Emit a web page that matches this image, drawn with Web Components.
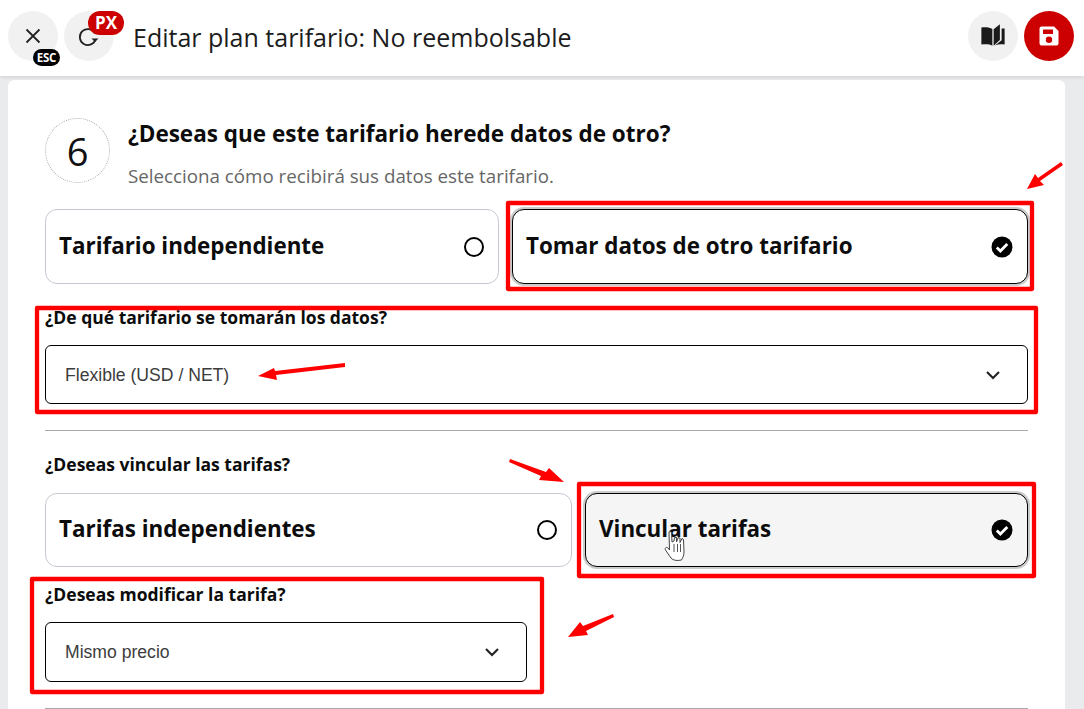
<!DOCTYPE html>
<html lang="es"><head><meta charset="utf-8"><title>Editar plan tarifario</title>
<style>
html,body{margin:0;padding:0;height:709px;overflow:hidden}
body{background:#eaebed;font-family:"Open Sans",sans-serif;color:#111;position:relative}
</style></head><body>
<x-header>
  <x-round slot="left" kind="gray" badge="ESC" badge-kind="esc"><svg viewBox="0 0 24 24" width="24" height="24"><path d="M5.5 5.5 18.5 18.5M18.5 5.5 5.5 18.5" stroke="#222" stroke-width="1.8" fill="none"/></svg></x-round>
  <x-round slot="left" kind="gray" badge="PX" badge-kind="px"><svg viewBox="0 0 24 24" width="24" height="24" style="margin-left:-2px"><path d="M19 9.5A8 8 0 1 0 19.6 15" stroke="#222" stroke-width="1.8" fill="none"/><path d="M15.5 14.5h7l-3.5 3.6z" fill="#222"/></svg></x-round>
  <span slot="title">Editar plan tarifario: No reembolsable</span>
  <x-round slot="right" kind="gray"><svg viewBox="0 0 26 24" width="28" height="26"><path d="M12.4 5.6C10 4 6 3.6 2.2 4.2V20C6 19.3 10 19.6 12.4 21Z" fill="#1a1a1a"/><path d="M13.6 5.8 19.4 1V15.6L13.6 21Z" fill="#1a1a1a"/><path d="M21 5 23.8 5V20C20.6 19.3 17.4 19.6 14.8 20.8L21 16Z" fill="#1a1a1a"/></svg></x-round>
  <x-round slot="right" kind="red"><svg viewBox="0 0 24 24" width="24" height="24"><path fill-rule="evenodd" d="M4.5 2.5H17L21.5 7V19.5A2 2 0 0 1 19.5 21.5H4.5A2 2 0 0 1 2.5 19.5V4.5A2 2 0 0 1 4.5 2.5ZM6 5.5V10H16V5.5ZM12 12.5A3.2 3.2 0 1 0 12 18.9 3.2 3.2 0 1 0 12 12.5Z" fill="#fff"/></svg></x-round>
</x-header>
<x-card>
  <x-step num="6" heading="¿Deseas que este tarifario herede datos de otro?" sub="Selecciona cómo recibirá sus datos este tarifario."></x-step>
  <x-options columns="454px 1fr">
    <x-option label="Tarifario independiente"></x-option>
    <x-option label="Tomar datos de otro tarifario" selected></x-option>
  </x-options>
  <x-select label="¿De qué tarifario se tomarán los datos?" value="Flexible (USD / NET)" style="margin-top:22px;--h:59px"></x-select>
  <x-rule style="margin-top:26px"></x-rule>
  <x-label style="margin-top:22px">¿Deseas vincular las tarifas?</x-label>
  <x-options columns="527px 1fr" style="margin-top:18px;--oh:74px">
    <x-option label="Tarifas independientes"></x-option>
    <x-option label="Vincular tarifas" selected hover></x-option>
  </x-options>
  <x-select label="¿Deseas modificar la tarifa?" value="Mismo precio" style="margin-top:16px;width:482px"></x-select>
  <x-rule style="margin-top:26px"></x-rule>
</x-card>
<x-annotations></x-annotations>
<script>
function def(name, css, html, init){
  customElements.define(name, class extends HTMLElement{
    connectedCallback(){
      if(this.shadowRoot) return;
      const r=this.attachShadow({mode:'open'});
      const a=n=>this.getAttribute(n)||'';
      r.innerHTML='<style>'+css+'</style>'+(typeof html==='function'?html(a,this):html);
      if(init) init(r,this);
    }
  });
}
def('x-header',`
:host{display:flex;align-items:center;height:76px;background:#fff;padding:0 10px 0 8px;box-sizing:border-box;box-shadow:0 1px 4px rgba(0,0,0,.12);position:relative;z-index:1}
.l,.r{display:flex;gap:6px}
.t{flex:1;margin-left:19px;font:400 25px/32px "Open Sans",sans-serif;color:#1c1c1c;position:relative;top:-1px}
`,`<div class="l"><slot name="left"></slot></div><div class="t"><slot name="title"></slot></div><div class="r"><slot name="right"></slot></div>`);
def('x-round',`
:host{display:flex;width:50px;height:50px;border-radius:50%;align-items:center;justify-content:center;position:relative;margin-top:-4px}
:host([kind=gray]){background:#f1f1f1}
:host([kind=red]){background:#cc0000}
.b{position:absolute;font-family:"Open Sans",sans-serif;font-weight:700;color:#fff;text-align:center}
.esc{left:25px;top:38px;width:27px;height:17px;background:#000;font-size:11.5px;line-height:17px;border-radius:9px;letter-spacing:-.2px}
.px{left:24px;top:0;width:36px;height:24px;background:#cc0000;font-size:17px;line-height:24px;border-radius:12px}
`,(a)=>`<slot></slot>${a('badge')?`<span class="b ${a('badge-kind')}">${a('badge')}</span>`:''}`);
def('x-card',`
:host{display:block;box-sizing:border-box;width:1057px;height:640px;margin:4px 0 0 8px;background:#fff;border-radius:6px 6px 0 0;padding:38px 37px 0 37px;overflow:hidden}
`,`<slot></slot>`);
def('x-step',`
:host{display:flex;gap:18px;height:91px}
.n{width:65px;height:65px;box-sizing:border-box;border:1px dotted #aaa;border-radius:50%;display:flex;align-items:center;justify-content:center;font-size:38px;color:#111;flex:none}
h2{margin:1px 0 0;font:700 22.5px/30px "Open Sans",sans-serif;color:#0c0c0c}
p{margin:15px 0 0;font:400 18.75px/24px "Open Sans",sans-serif;color:#666}
`,(a)=>`<div class="n">${a('num')}</div><div class="b"><h2>${a('heading')}</h2><p>${a('sub')}</p></div>`);
def('x-options',`
:host{display:grid;gap:13px}
`,`<slot></slot>`,(r,h)=>{h.style.gridTemplateColumns=h.getAttribute('columns')});
def('x-option',`
:host{display:flex;align-items:center;justify-content:space-between;box-sizing:border-box;height:var(--oh,75px);padding:0 14.5px 0 13px;background:#fff;border:1px solid #c6c9d2;border-radius:12px;font:700 22.4px/30px "Open Sans",sans-serif;color:#0c0c0c}
:host([selected]){border-color:#000;box-shadow:0 0 0 2px #ccc}
:host([hover]){background:#f5f5f5}
.lb{position:relative;top:-1px}
.radio{width:20px;height:20px;box-sizing:border-box;border:2px solid #000;border-radius:50%;background:#fff}
svg{display:block}
`,(a,h)=>`<span class="lb">${a('label')}</span>${h.hasAttribute('selected')?`<svg viewBox="0 0 22 22" width="22" height="22"><circle cx="11" cy="11" r="10.5" fill="#000"/><path d="M5.8 11.4 9.4 15 16.3 7.9" stroke="#fff" stroke-width="2.8" fill="none"/></svg>`:`<span class="radio"></span>`}`);
def('x-label',`
:host{display:block;font:700 17.5px/22px "Open Sans",sans-serif;color:#0c0c0c;height:22px}
`,`<slot></slot>`);
def('x-select',`
:host{display:block}
.l{font:700 17.5px/22px "Open Sans",sans-serif;color:#0c0c0c;height:22px}
.s{margin-top:17px;height:var(--h,60px);box-sizing:border-box;border:1px solid #000;border-radius:6px;display:flex;align-items:center;justify-content:space-between;padding:0 26px 0 19px;font:400 17.6px/20px "Liberation Sans",sans-serif;color:#3c3c3c}
svg{display:block}
`,(a)=>`<div class="l">${a('label')}</div><div class="s"><span>${a('value')}</span><svg viewBox="0 0 16 16" width="16" height="16"><path d="M2 5 8 11 14 5" stroke="#222" stroke-width="2.1" fill="none"/></svg></div>`);
def('x-rule',`
:host{display:block;height:1px;background:#aaa}
`,``);
def('x-annotations',`
:host{position:absolute;left:0;top:0;width:1084px;height:709px;z-index:5;pointer-events:none}
svg{position:absolute;left:0;top:0}
`,`<svg width="1084" height="709" viewBox="0 0 1084 709">
<g fill="none" stroke="#ff0000" stroke-width="4.3" stroke-linejoin="round">
<rect x="508" y="203" width="524" height="86"/>
<rect x="37" y="308" width="999" height="104"/>
<rect x="579" y="484" width="455" height="92"/>
<rect x="32" y="579" width="510" height="113"/>
</g>
<g fill="#ff0000">
<path d="M1061 162 1063 165 1040 181 1044 185 1027 189 1035 174 1038 178Z"/>
<path d="M345 363 345 367 276 375 277 380 258 376 274 368 275 371Z"/>
<path d="M510 459 509 462 541 476 539 480 564 482 549 468 546 472Z"/>
<path d="M613 614 614 617 586 631 588 635 568 637 580 622 583 626Z"/>
</g>
<path d="M669 532.5C669 531.5 671.5 531.5 671.5 532.5L672 542 674 541 674.5 537.5 676.5 537.5 676.5 542 678 537.7 680 538 680 542.5 682 538.5 683.5 539.5 684 552C684 556 682.5 558 681.5 560 677 561 673 560.5 671 558L665.5 550C664.5 548 666.5 546.5 668 548L669.5 550Z" fill="#fff" stroke="#444" stroke-width="1"/>
<path d="M674 544V552M677.5 544V552M680.5 544V552" stroke="#555" stroke-width="1"/>
</svg>`);
</script>
</body></html>
